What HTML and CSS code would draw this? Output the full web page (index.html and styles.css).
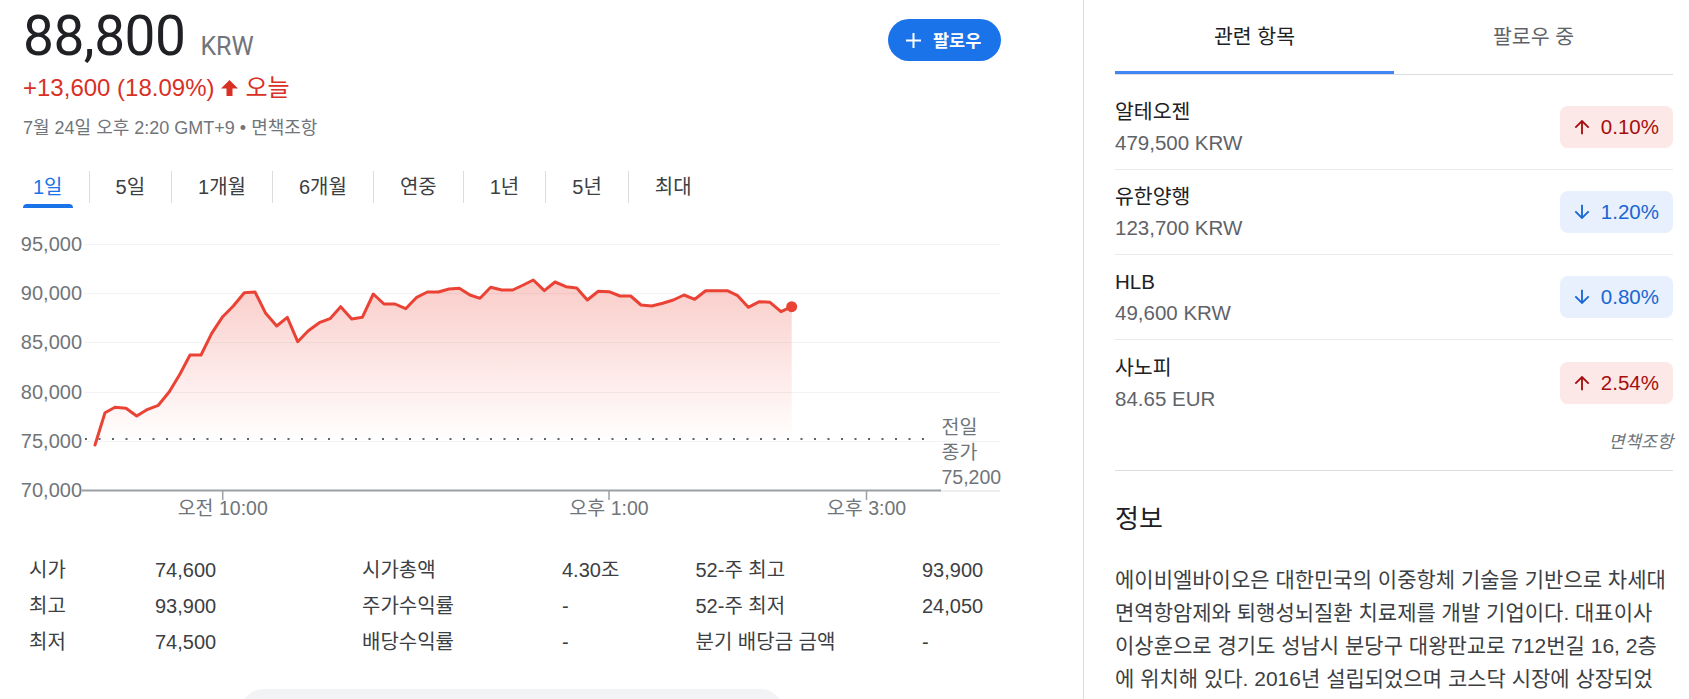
FILE: index.html
```html
<!DOCTYPE html>
<html lang="ko">
<head>
<meta charset="utf-8">
<title>에이비엘바이오 주가</title>
<link rel="stylesheet" href="styles.css">
</head>
<body>
<div class="page">
  <main class="main">
    <div class="top">
      <div class="quote">
        <div class="price-row"><span class="price">88,800</span><span class="currency">KRW</span></div>
        <div class="change">+13,600 (18.09%)<svg class="up-arrow" viewBox="0 0 17 16"><path d="M8.5 0 L17 8.5 H11.5 V16 H5.5 V8.5 H0 Z"/></svg><span class="today">오늘</span></div>
        <div class="meta">7월 24일 오후 2:20 GMT+9 • 면책조항</div>
      </div>
      <button class="follow" type="button"><svg class="plus" viewBox="0 0 15 15"><path d="M7.5 0V15M0 7.5H15"/></svg><span>팔로우</span></button>
    </div>

    <nav class="ranges">
      <span class="range active">1일</span><span class="sep"></span>
      <span class="range">5일</span><span class="sep"></span>
      <span class="range">1개월</span><span class="sep"></span>
      <span class="range">6개월</span><span class="sep"></span>
      <span class="range">연중</span><span class="sep"></span>
      <span class="range">1년</span><span class="sep"></span>
      <span class="range">5년</span><span class="sep"></span>
      <span class="range">최대</span>
    </nav>

    <svg class="chart" viewBox="0 0 978 300" width="978" height="300">
      <defs>
        <linearGradient id="area" x1="0" y1="60" x2="0" y2="222" gradientUnits="userSpaceOnUse">
          <stop offset="0" stop-color="#ea4335" stop-opacity="0.27"/>
          <stop offset="1" stop-color="#ea4335" stop-opacity="0"/>
        </linearGradient>
      </defs>
      <g class="grid">
        <line x1="61" y1="24.5" x2="977" y2="24.5"/>
        <line x1="61" y1="73.5" x2="977" y2="73.5"/>
        <line x1="61" y1="122.5" x2="977" y2="122.5"/>
        <line x1="61" y1="172.5" x2="977" y2="172.5"/>
        <line x1="61" y1="221.5" x2="977" y2="221.5"/>
      </g>
      <g class="ylabels">
        <text x="59" y="31">95,000</text>
        <text x="59" y="80">90,000</text>
        <text x="59" y="129">85,000</text>
        <text x="59" y="179">80,000</text>
        <text x="59" y="228">75,000</text>
        <text x="59" y="277">70,000</text>
      </g>
      <line class="prev-close" x1="62" y1="219" x2="907" y2="219"/>
      <path class="area" d="M72,225 L82,192.7 L92,187.3 L103,188.3 L113.7,196 L124.7,189.3 L135.3,185.3 L146.3,171.7 L157,154 L167,135 L178,135 L188.7,113.3 L199.7,96.7 L210.3,86 L221.3,72.7 L232,72 L242.7,93.3 L253.7,106 L264.3,97.3 L274.7,121.7 L285.3,110.7 L296.3,102.7 L307,98.7 L317.7,86.7 L328.7,99 L339.3,97.3 L350.3,74 L361,84 L372,84 L382.7,88.7 L393.7,77.3 L404.3,72 L415.3,72 L426,69 L436.3,68.3 L447,75 L457,78.3 L467.7,67.3 L478.7,70 L489.7,70 L500.3,65 L510.3,60 L521.3,70.7 L532,62 L543,66.7 L553.7,68 L564.3,80 L575.3,71.3 L586,71.7 L597,76 L607.7,76 L618,85 L628.7,86 L639.7,83.3 L650.3,80 L661,75 L671.7,79.3 L682.7,70.7 L693.7,70.7 L704.3,70.7 L714.7,75.7 L725.3,87.3 L736.3,81.7 L747,82.3 L758,91.7 L768.7,86.7 L768.7,225 Z"/>
      <path class="line" d="M72,225 L82,192.7 L92,187.3 L103,188.3 L113.7,196 L124.7,189.3 L135.3,185.3 L146.3,171.7 L157,154 L167,135 L178,135 L188.7,113.3 L199.7,96.7 L210.3,86 L221.3,72.7 L232,72 L242.7,93.3 L253.7,106 L264.3,97.3 L274.7,121.7 L285.3,110.7 L296.3,102.7 L307,98.7 L317.7,86.7 L328.7,99 L339.3,97.3 L350.3,74 L361,84 L372,84 L382.7,88.7 L393.7,77.3 L404.3,72 L415.3,72 L426,69 L436.3,68.3 L447,75 L457,78.3 L467.7,67.3 L478.7,70 L489.7,70 L500.3,65 L510.3,60 L521.3,70.7 L532,62 L543,66.7 L553.7,68 L564.3,80 L575.3,71.3 L586,71.7 L597,76 L607.7,76 L618,85 L628.7,86 L639.7,83.3 L650.3,80 L661,75 L671.7,79.3 L682.7,70.7 L693.7,70.7 L704.3,70.7 L714.7,75.7 L725.3,87.3 L736.3,81.7 L747,82.3 L758,91.7 L768.7,86.7"/>
      <circle class="dot" cx="768.7" cy="86.7" r="5.5"/>
      <line class="axis" x1="59" y1="270.5" x2="918" y2="270.5"/>
      <line class="axis-end" x1="918" y1="271" x2="977" y2="271"/>
      <g class="ticks">
        <line x1="199.7" y1="271" x2="199.7" y2="280"/>
        <line x1="586" y1="271" x2="586" y2="280"/>
        <line x1="843.5" y1="271" x2="843.5" y2="280"/>
      </g>
      <g class="xlabels">
        <text x="199.7" y="295">오전 10:00</text>
        <text x="586" y="295">오후 1:00</text>
        <text x="843.5" y="295">오후 3:00</text>
      </g>
      <g class="close-label">
        <text x="918.5" y="213.5">전일</text>
        <text x="918.5" y="238.5">종가</text>
        <text x="918.5" y="263.5">75,200</text>
      </g>
    </svg>

    <div class="stats">
      <span class="k">시가</span><span class="v">74,600</span>
      <span class="k">시가총액</span><span class="v">4.30조</span>
      <span class="k">52-주 최고</span><span class="v">93,900</span>
      <span class="k">최고</span><span class="v">93,900</span>
      <span class="k">주가수익률</span><span class="v">-</span>
      <span class="k">52-주 최저</span><span class="v">24,050</span>
      <span class="k">최저</span><span class="v">74,500</span>
      <span class="k">배당수익률</span><span class="v">-</span>
      <span class="k">분기 배당금 금액</span><span class="v">-</span>
    </div>

    <button class="more" type="button" aria-label="더보기"></button>
  </main>

  <aside class="side">
    <div class="side-tabs">
      <div class="side-tab active">관련 항목</div>
      <div class="side-tab">팔로우 중</div>
    </div>
    <ul class="related">
      <li class="item">
        <div class="info"><div class="name">알테오젠</div><div class="sub">479,500 KRW</div></div>
        <div class="badge up"><svg viewBox="0 0 24 24"><path d="M4 12l1.41 1.41L11 7.83V20h2V7.83l5.58 5.59L20 12l-8-8-8 8z"/></svg><span>0.10%</span></div>
      </li>
      <li class="item">
        <div class="info"><div class="name">유한양행</div><div class="sub">123,700 KRW</div></div>
        <div class="badge down"><svg viewBox="0 0 24 24"><path d="M20 12l-1.41-1.41L13 16.17V4h-2v12.17l-5.58-5.59L4 12l8 8 8-8z"/></svg><span>1.20%</span></div>
      </li>
      <li class="item">
        <div class="info"><div class="name">HLB</div><div class="sub">49,600 KRW</div></div>
        <div class="badge down"><svg viewBox="0 0 24 24"><path d="M20 12l-1.41-1.41L13 16.17V4h-2v12.17l-5.58-5.59L4 12l8 8 8-8z"/></svg><span>0.80%</span></div>
      </li>
      <li class="item">
        <div class="info"><div class="name">사노피</div><div class="sub">84.65 EUR</div></div>
        <div class="badge up"><svg viewBox="0 0 24 24"><path d="M4 12l1.41 1.41L11 7.83V20h2V7.83l5.58 5.59L20 12l-8-8-8 8z"/></svg><span>2.54%</span></div>
      </li>
    </ul>
    <div class="disclaimer">면책조항</div>
    <section class="about">
      <h2>정보</h2>
      <p>에이비엘바이오은 대한민국의 이중항체 기술을 기반으로 차세대 면역항암제와 퇴행성뇌질환 치료제를 개발 기업이다. 대표이사 이상훈으로 경기도 성남시 분당구 대왕판교로 712번길 16, 2층에 위치해 있다. 2016년 설립되었으며 코스닥 시장에 상장되었다.</p>
    </section>
  </aside>
</div>
</body>
</html>
```

FILE: styles.css
```css
* { box-sizing: border-box; }

html, body {
  margin: 0;
  padding: 0;
}

body {
  font-family: "Liberation Sans", "Noto Sans CJK KR", sans-serif;
  color: #202124;
  background: #fff;
  overflow: hidden;
}

.page {
  display: flex;
  min-height: 100vh;
}

/* ---------- main column ---------- */
.main {
  flex: none;
  width: 978px;
  margin-left: 23px;
}

.top {
  display: flex;
  justify-content: space-between;
  align-items: flex-start;
}

.price-row {
  display: flex;
  align-items: baseline;
  margin-top: 4px;
  height: 64px;
  line-height: 64px;
}

.price {
  font-family: Roboto, "Liberation Sans", sans-serif;
  font-size: 55px;
  letter-spacing: -0.5px;
  color: #202124;
}

.currency {
  font-family: Roboto, "Liberation Sans", sans-serif;
  font-size: 25px;
  color: #70757a;
  margin-left: 15px;
}

.change {
  margin-top: 6px;
  font-size: 24px;
  line-height: 28px;
  color: #d93025;
  white-space: nowrap;
}

.up-arrow {
  width: 17px;
  height: 16px;
  margin-left: 7px;
  fill: #d93025;
  vertical-align: baseline;
}

.today {
  margin-left: 7px;
}

.meta {
  margin-top: 14px;
  font-size: 18px;
  line-height: 24px;
  color: #70757a;
}

.follow {
  display: flex;
  align-items: center;
  gap: 12px;
  margin-top: 19px;
  width: 113px;
  height: 42px;
  padding: 0 0 0 18px;
  border: 0;
  border-radius: 21px;
  background: #1a73e8;
  color: #fff;
  font-family: "Noto Sans CJK KR", sans-serif;
  font-size: 17.5px;
  font-weight: 700;
  line-height: 20px;
}

.plus {
  width: 15px;
  height: 15px;
  stroke: #fff;
  stroke-width: 2;
  fill: none;
}

/* range tabs */
.ranges {
  display: flex;
  gap: 16px;
  margin-top: 31px;
  height: 37px;
  font-size: 20px;
}

.range {
  position: relative;
  padding: 0 10px;
  line-height: 33px;
  color: #3c4043;
  white-space: nowrap;
}

.range.active {
  color: #1a73e8;
}

.range.active::after {
  content: "";
  position: absolute;
  left: 0;
  right: 0;
  bottom: 0;
  height: 4px;
  background: #1a73e8;
  border-radius: 4px 4px 0 0;
}

.sep {
  width: 1px;
  height: 32px;
  background: #dadce0;
}

/* chart */
.chart {
  display: block;
  margin-top: 12px;
  width: 978px;
  height: 300px;
  overflow: visible;
}

.chart text {
  font-family: "Liberation Sans", "Noto Sans CJK KR", sans-serif;
  fill: #70757a;
}

.grid line {
  stroke: #f1f3f4;
  stroke-width: 1;
}

.ylabels text {
  font-size: 20px;
  text-anchor: end;
}

.prev-close {
  stroke: #5f6368;
  stroke-width: 2;
  stroke-dasharray: 2 11.5;
}

.area {
  fill: url(#area);
}

.line {
  fill: none;
  stroke: #ea4335;
  stroke-width: 3;
  stroke-linejoin: round;
  stroke-linecap: round;
}

.dot {
  fill: #ea4335;
}

.axis {
  stroke: #9aa0a6;
  stroke-width: 2;
}

.axis-end {
  stroke: #dadce0;
  stroke-width: 1;
}

.ticks line {
  stroke: #9aa0a6;
  stroke-width: 1.5;
}

.xlabels text {
  font-size: 19.5px;
  text-anchor: middle;
}

.close-label text {
  font-size: 19.5px;
}

/* stats */
.stats {
  display: grid;
  grid-template-columns: 126px 207px 200px 133.5px 226.5px 1fr;
  margin-top: 32px;
  padding-left: 6px;
  font-size: 20px;
  line-height: 36px;
  color: #3c4043;
  white-space: nowrap;
}

.more {
  display: block;
  width: 544px;
  height: 48px;
  margin: 29px auto 0;
  border: 0;
  border-radius: 24px;
  background: #f1f3f4;
}

/* ---------- side column ---------- */
.side {
  flex: none;
  width: 590px;
  margin-left: 82px;
  padding-left: 31px;
  border-left: 1px solid #dadce0;
}

.side-tabs {
  display: flex;
  border-bottom: 1px solid #dadce0;
}

.side-tab {
  position: relative;
  flex: 1;
  height: 74px;
  line-height: 74px;
  text-align: center;
  font-size: 20.5px;
  color: #5f6368;
}

.side-tab.active {
  color: #202124;
}

.side-tab.active::after {
  content: "";
  position: absolute;
  left: 0;
  right: 0;
  bottom: 0;
  height: 3px;
  background: #4285f4;
}

.related {
  list-style: none;
  margin: 10px 0 0;
  padding: 0;
}

.item {
  display: flex;
  justify-content: space-between;
  align-items: center;
  height: 85px;
  border-bottom: 1px solid #e8eaed;
}

.item:last-child {
  border-bottom: 0;
}

.name,
.sub {
  font-size: 20.5px;
  line-height: 31px;
}

.name {
  color: #202124;
}

.sub {
  color: #5f6368;
}

.badge {
  display: flex;
  align-items: center;
  gap: 8px;
  height: 42px;
  padding: 0 14px 0 11px;
  border-radius: 8px;
  font-size: 20.5px;
}

.badge svg {
  width: 22px;
  height: 22px;
  fill: currentColor;
}

.badge.up {
  background: #fce8e6;
  color: #a50e0e;
}

.badge.down {
  background: #e8f0fe;
  color: #1967d2;
}

.disclaimer {
  margin-top: 5px;
  padding-bottom: 16px;
  border-bottom: 1px solid #dadce0;
  text-align: right;
  font-size: 17.5px;
  line-height: 24px;
  font-style: italic;
  color: #70757a;
}

.about h2 {
  margin: 32px 0 0;
  font-size: 26px;
  line-height: 32px;
  font-weight: 400;
  color: #202124;
}

.about p {
  width: 554px;
  margin: 28px 0 0;
  font-size: 21px;
  line-height: 33px;
  color: #3c4043;
}
```
